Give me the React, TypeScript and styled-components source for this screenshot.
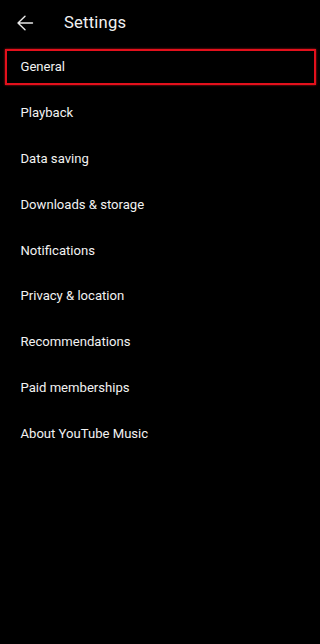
import React from 'react'
import styled, { createGlobalStyle } from 'styled-components'

const items = [
  'General',
  'Playback',
  'Data saving',
  'Downloads & storage',
  'Notifications',
  'Privacy & location',
  'Recommendations',
  'Paid memberships',
  'About YouTube Music',
]

const App = () => {
  return (
    <Page>
      <Global />
      <Header>
        <Back aria-label="Back">
          <svg width="18" height="18" viewBox="0 0 18 18" fill="none">
            <path d="M16.5 9H2M9 2.2L2 9l7 6.8" stroke="#e8e8e8" strokeWidth="1.4" strokeLinecap="round" strokeLinejoin="round" />
          </svg>
        </Back>
        <Title>Settings</Title>
      </Header>
      <List>
        {items.map((item, i) => (
          <Row key={item}>
            <Label $selected={i === 0}>{item}</Label>
          </Row>
        ))}
      </List>
    </Page>
  )
}

export default App

const Global = createGlobalStyle`
  html, body {
    margin: 0;
    padding: 0;
    background: #000;
  }
  * {
    box-sizing: border-box;
  }
`

const Page = styled.div`
  width: 320px;
  min-height: 644px;
  background: #000;
  color: #f2f2f2;
  font-family: Roboto, "Noto Sans", sans-serif;
`

const Header = styled.div`
  height: 44px;
  display: flex;
  align-items: center;
  padding-left: 16px;
`

const Back = styled.div`
  width: 18px;
  height: 18px;
  display: flex;
  align-items: center;
  justify-content: center;
  margin-top: 1px;
`

const Title = styled.h1`
  margin: 0 0 0 30px;
  font-size: 16.6px;
  font-weight: 400;
  letter-spacing: 0.2px;
`

const List = styled.div`
  display: flex;
  flex-direction: column;
`

const Row = styled.div`
  height: 45.8px;
  display: flex;
  padding: 5px 4px 5px 5px;
`

const Label = styled.div<{ $selected?: boolean }>`
  flex: 1;
  display: flex;
  align-items: center;
  padding-left: 13.5px;
  font-size: 13.1px;
  border: 2.5px solid ${p => (p.$selected ? '#e3101c' : 'transparent')};
  box-shadow: ${p => (p.$selected ? '0 0 2px rgba(255, 30, 30, 0.7)' : 'none')};
`
